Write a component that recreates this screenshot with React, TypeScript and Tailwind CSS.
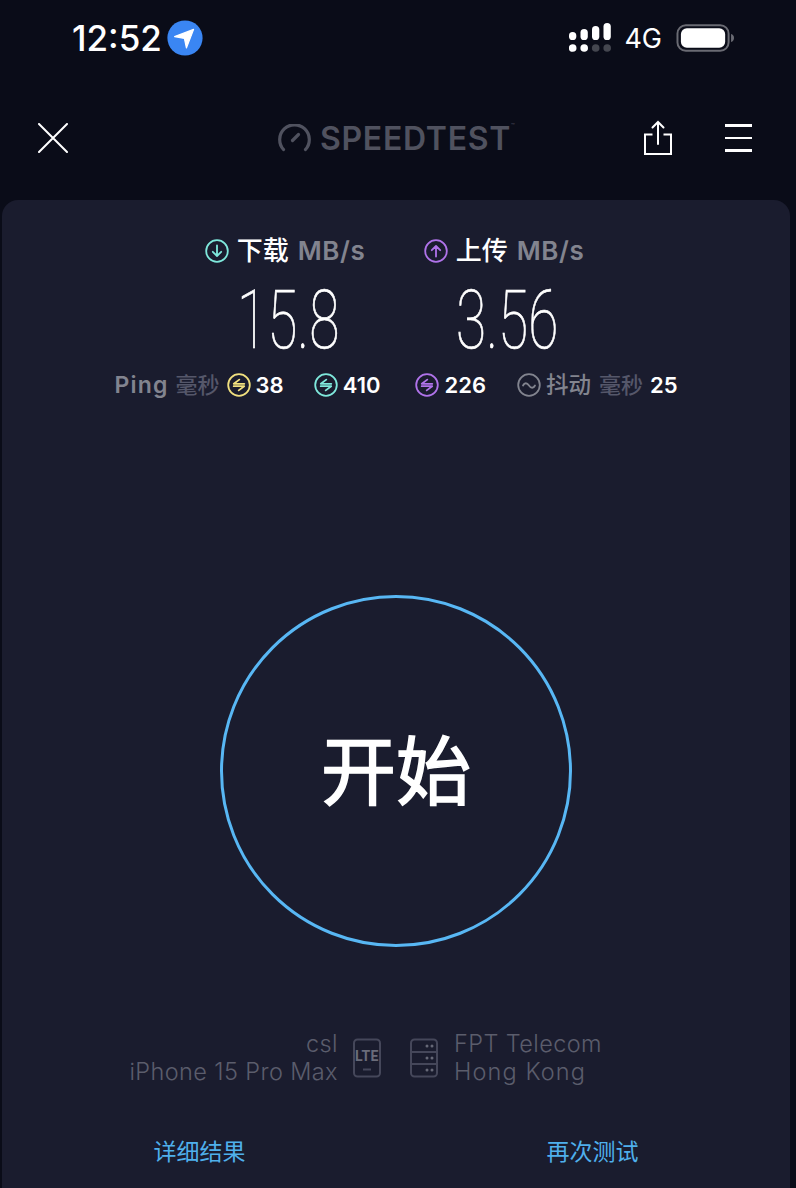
import React from "react";

const Ring = ({ color, children, size = 24 }: { color: string; children: React.ReactNode; size?: number }) => (
  <svg width={size} height={size} viewBox="0 0 24 24" fill="none" stroke={color} strokeWidth="1.800" strokeLinecap="round" strokeLinejoin="round" className="shrink-0">
    <circle cx="12" cy="12" r="10.800" />
    {children}
  </svg>
);
const PingGlyph = () => (
  <>
    <path d="M17.300 10.800H6.800L12.300 6.600" />
    <path d="M6.700 13.200H17.200L11.700 17.400" />
  </>
);

const Stat = ({ color, value }: { color: string; value: string }) => (
  <div className="flex items-center gap-[5px]">
    <Ring color={color}><PingGlyph /></Ring>
    <span className="text-[22px] font-semibold text-white leading-none">{value}</span>
  </div>
);

const Speed = ({ label, value, color, up, numberClass }: { label: string; value: string; color: string; up?: boolean; numberClass: string }) => (
  <div className="flex flex-col items-center w-[161px]">
    <div className="flex items-center h-[30px] whitespace-nowrap">
      <Ring color={color}>
        {up ? <path d="M12 17.500V7M7.800 11.200 12 7l4.200 4.200" /> : <path d="M12 6.500V17M7.800 12.800 12 17l4.200-4.200" />}
      </Ring>
      <span className="ml-[8px] text-[26px] font-medium text-white leading-none">{label}</span>
      <span className="ml-[9px] text-[26px] font-semibold text-[#82848f] leading-none tracking-[0.6px]">MB/s</span>
    </div>
    <div className={`mt-[14px] h-[80px] flex items-center justify-center text-white text-[81px] leading-none font-thin scale-x-[0.68] [-webkit-text-stroke:0.7px_white] [font-family:Roboto,sans-serif] ${numberClass}`}>
      {value}
    </div>
  </div>
);

export default function App() {
  return (
    <div className="w-[796px] h-[1188px] bg-[#0a0c18] flex flex-col overflow-hidden [font-family:Inter,'Noto_Sans_CJK_SC',sans-serif]">
      {/* status bar */}
      <div className="h-[76px] flex items-center pl-[72px] pr-[62px] shrink-0">
        <span className="text-[35px] font-medium text-white leading-none">12:52</span>
        <svg width="36" height="36" viewBox="0 0 36 36" className="ml-[5px]">
          <circle cx="18" cy="18" r="17.600" fill="#3a86f3" />
          <path d="M7.600 16.600 26.600 9.400 19.400 28 17.400 18.400Z" fill="#fff" stroke="#fff" strokeWidth="1.200" strokeLinejoin="round" />
        </svg>
        <div className="flex-1" />
        <svg width="43" height="30" viewBox="0 0 43 30" fill="#fff" className="mr-[12px]">
          <rect x="0" y="9" width="7.300" height="8" rx="3.600" />
          <rect x="11.500" y="6" width="7.300" height="11" rx="3.600" />
          <rect x="23" y="3" width="7.300" height="14" rx="3.600" />
          <rect x="34.500" y="0" width="7.300" height="17" rx="3.600" />
          <circle cx="3.700" cy="25" r="3.800" />
          <circle cx="15.200" cy="25" r="3.800" />
          <circle cx="26.700" cy="25" r="3.800" fill="#44464f" />
          <circle cx="38.200" cy="25" r="3.800" fill="#44464f" />
        </svg>
        <span className="text-[27px] text-white leading-none">4G</span>
        <svg width="58" height="30" viewBox="0 0 59 30" className="ml-[14px]">
          <rect x="1.500" y="2" width="52" height="26" rx="8.500" fill="none" stroke="#6a6b73" strokeWidth="2" />
          <rect x="5" y="5" width="45" height="20" rx="6" fill="#fff" />
          <path d="M56 11c2 .5 3 2 3 4s-1 3.500-3 4z" fill="#6a6b73" />
        </svg>
      </div>

      {/* header */}
      <div className="h-[124px] flex items-center pl-[38px] pr-[44px] shrink-0">
        <svg width="30" height="30" viewBox="0 0 30 30" stroke="#fff" strokeWidth="2" strokeLinecap="round">
          <path d="M1 1 29 29M29 1 1 29" />
        </svg>
        <div className="flex-1 flex items-center pl-[210px]">
          <svg width="33" height="28" viewBox="0 0 33 28" fill="none" stroke="#50525f" strokeWidth="3.200" strokeLinecap="round" className="mr-[9px]">
            <path d="M5.500 25.500A14.800 14.800 0 1 1 27.500 25.500" />
            <path d="M14.500 16.500 20.500 10.500" />
          </svg>
          <span className="text-[32px] font-semibold text-[#50525f] leading-none tracking-[0.7px] mt-[2px]">SPEEDTEST</span>
          <span className="text-[6px] text-[#50525f] self-start">™</span>
        </div>
        <svg width="30" height="36" viewBox="0 0 30 36" fill="none" stroke="#fff" strokeWidth="2" strokeLinecap="round" className="mr-[52px]">
          <path d="M15 24V2M9.500 7.500 15 2l5.500 5.500" />
          <path d="M9.500 14.500H2V34H28V14.500H20.500" strokeLinecap="butt" />
        </svg>
        <div className="w-[27px] flex flex-col gap-[10px]">
          <div className="h-[2.500px] bg-white" />
          <div className="h-[2.500px] bg-white" />
          <div className="h-[2.500px] bg-white" />
        </div>
      </div>

      {/* card */}
      <div className="ml-[2px] mr-[6px] flex-1 bg-[#1a1c2e] rounded-t-[16px] flex flex-col items-center pt-[36px]">
        <div className="flex gap-[58px] mr-[3px]">
          <Speed label="下载" value="15.8" color="#7fe8dc" numberClass="ml-[6px]" />
          <Speed label="上传" value="3.56" color="#b073ea" up numberClass="ml-[7px]" />
        </div>
        <div className="mt-[13px] flex items-center h-[24px] whitespace-nowrap">
          <span className="text-[23px] font-semibold text-[#82848f] leading-none tracking-[1.200px]">Ping</span>
          <span className="ml-[7px] text-[22px] font-medium text-[#55576a] leading-none">毫秒</span>
          <div className="ml-[7px]"><Stat color="#f1e07f" value="38" /></div>
          <div className="ml-[30px]"><Stat color="#7fe8dc" value="410" /></div>
          <div className="ml-[35px]"><Stat color="#b073ea" value="226" /></div>
          <div className="ml-[31px]"><Ring color="#82848f"><path d="M6 12.500c1.500-3 4-3 6 0s4.500 3 6 0" /></Ring></div>
          <span className="ml-[5px] text-[22.500px] font-medium text-[#82848f] leading-none">抖动</span>
          <span className="ml-[8px] text-[22px] font-medium text-[#55576a] leading-none">毫秒</span>
          <span className="ml-[7px] text-[22px] font-semibold text-white leading-none">25</span>
        </div>

        <div className="mt-[198px] w-[352px] h-[352px] rounded-full border-[3px] border-[#58b7f4] flex items-center justify-center shrink-0">
          <span className="text-[75px] font-normal text-white leading-none [-webkit-text-stroke:1.500px_white]">开始</span>
        </div>

        <div className="mt-[83px] flex items-center text-[#5b5d6c] text-[23.500px] leading-[28px] font-light tracking-[0.4px]">
          <div className="w-[200px] flex flex-col items-end whitespace-nowrap">
            <span>csl</span>
            <span>iPhone 15 Pro Max</span>
          </div>
          <svg width="28" height="40" viewBox="0 0 28 40" fill="none" stroke="#45475a" strokeWidth="2" className="ml-[15px]">
            <rect x="1" y="1.500" width="26" height="37" rx="3.500" />
            <text x="14" y="22.500" textAnchor="middle" fontSize="14" fontWeight="700" fill="#6a6c7a" stroke="none" fontFamily="Roboto">LTE</text>
            <path d="M10 31.500H18" />
          </svg>
          <svg width="28" height="40" viewBox="0 0 28 40" fill="none" stroke="#45475a" strokeWidth="2" className="ml-[29px]">
            <rect x="1" y="1.500" width="26" height="37" rx="3.500" />
            <path d="M1 14H27M1 26H27" />
            <g fill="#666877" stroke="none">
              <circle cx="17" cy="8" r="1.500" /><circle cx="22" cy="8" r="1.500" />
              <circle cx="17" cy="20" r="1.500" /><circle cx="22" cy="20" r="1.500" />
              <circle cx="17" cy="32" r="1.500" /><circle cx="22" cy="32" r="1.500" />
            </g>
          </svg>
          <div className="ml-[16px] w-[200px] flex flex-col whitespace-nowrap">
            <span>FPT Telecom</span>
            <span className="tracking-[1.100px]">Hong Kong</span>
          </div>
        </div>

        <div className="mt-[55px] flex gap-[301px] text-[23px] text-[#4fb0ec] leading-none">
          <span>详细结果</span>
          <span>再次测试</span>
        </div>
      </div>
    </div>
  );
}
